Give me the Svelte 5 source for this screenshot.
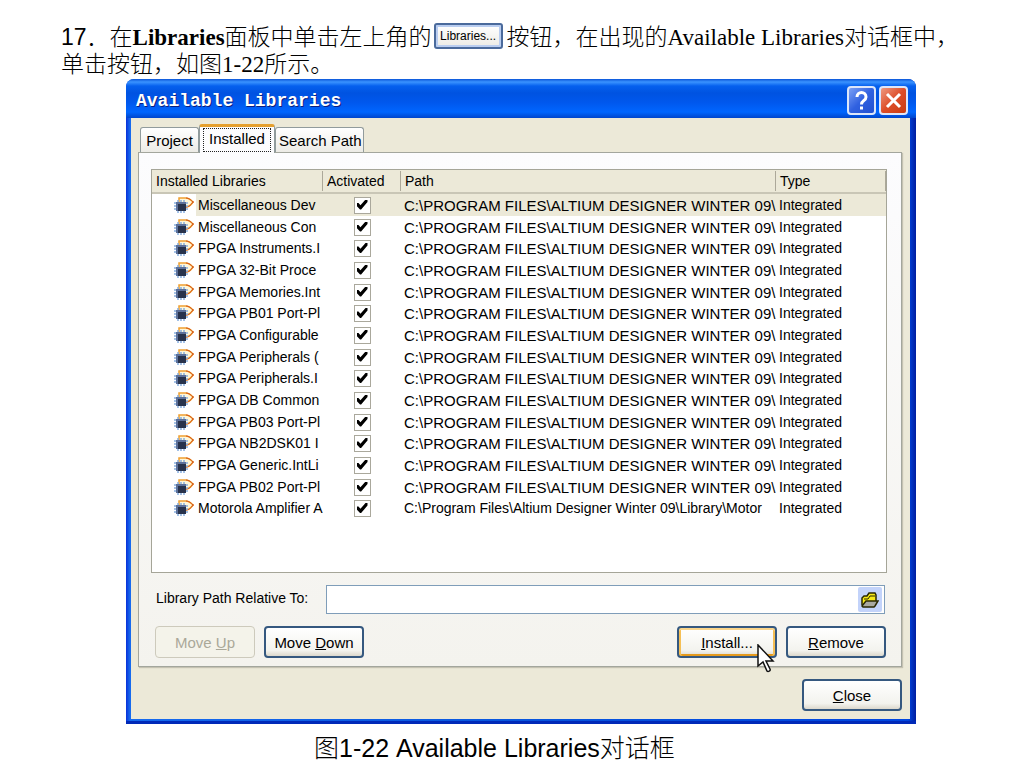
<script lang="ts">
	const programFiles = String.raw`C:\PROGRAM FILES\ALTIUM DESIGNER WINTER 09` + '\\';
	const libraryFolder = String.raw`C:\Program Files\Altium Designer Winter 09\Library\Motor`;

	const names = [
		'Miscellaneous Dev',
		'Miscellaneous Con',
		'FPGA Instruments.I',
		'FPGA 32-Bit Proce',
		'FPGA Memories.Int',
		'FPGA PB01 Port-Pl',
		'FPGA Configurable',
		'FPGA Peripherals (',
		'FPGA Peripherals.I',
		'FPGA DB Common',
		'FPGA PB03 Port-Pl',
		'FPGA NB2DSK01 I',
		'FPGA Generic.IntLi',
		'FPGA PB02 Port-Pl',
		'Motorola Amplifier A'
	];

	let libraries = $state(
		names.map((name) => ({
			name,
			activated: true,
			path: name.startsWith('Motorola') ? libraryFolder : programFiles,
			type: 'Integrated'
		}))
	);

	let selected = $state(0);
	let relativePath = $state('');
</script>

<main>
	<p class="step">
		<span class="number">17．</span>在<b>Libraries</b>面板中单击左上角的<button
			class="inline-button">Libraries...</button
		>按钮，在出现的Available Libraries对话框中，<br />单击按钮，如图1-22所示。
	</p>

	<section class="dialog" aria-labelledby="dialog-title">
		<header>
			<h1 id="dialog-title">Available Libraries</h1>
			<button class="caption help" aria-label="Help">
				<svg viewBox="0 0 25 25">
					<path d="M8 9C8 3 17 3 17 9C17 13 12.500 12 12.500 16.500" />
					<path d="M12.500 18.500v3" />
				</svg>
			</button>
			<button class="caption exit" aria-label="Close window">
				<svg viewBox="0 0 25 25"><path d="M6 6l13 13M19 6L6 19" /></svg>
			</button>
		</header>

		<div class="body">
			<div class="tabs" role="tablist">
				<button role="tab" aria-selected="false">Project</button>
				<button role="tab" aria-selected="true" class="active"><span>Installed</span></button>
				<button role="tab" aria-selected="false">Search Path</button>
			</div>

			<div class="panel" role="tabpanel">
				<div class="list">
					<table>
						<colgroup>
							<col class="col-name" />
							<col class="col-activated" />
							<col />
							<col class="col-type" />
						</colgroup>
						<thead>
							<tr>
								<th>Installed Libraries</th>
								<th>Activated</th>
								<th>Path</th>
								<th>Type</th>
							</tr>
						</thead>
						<tbody>
							{#each libraries as library, i}
								<tr class:selected={i === selected} onclick={() => (selected = i)}>
									<td class="name">
										<div>
											<svg class="chip" viewBox="0 0 20 19">
												<path
													d="M5 6V2h7c3 0 5 2 7 4-2 3-4 5-7 5"
													fill="#fff6d8"
													stroke="#f0a030"
													stroke-width="1.500"
												/>
												<path d="M12 2c3 0 5 2 7 4h1M19 6c-2 3-4 5-7 5" stroke="#d4581c" />
												<path
													d="M4 4v13M7 4v13M10 4v13M0 7h14M0 10h14M0 13h14"
													stroke="#86aee0"
													stroke-width="1.500"
												/>
												<path d="M2 6h10v9H2z" fill="#5c7099" />
												<path d="M4 8h8v7H4z" fill="#28334c" />
											</svg>
											<span>{library.name}</span>
										</div>
									</td>
									<td class="check">
										<input
											type="checkbox"
											aria-label="Activated"
											bind:checked={library.activated}
										/>
									</td>
									<td class:caps={library.path === programFiles}>{library.path}</td>
									<td>{library.type}</td>
								</tr>
							{/each}
						</tbody>
					</table>
				</div>

				<div class="path-row">
					<label for="relative-path">Library Path Relative To:</label>
					<div class="path-box">
						<input id="relative-path" type="text" bind:value={relativePath} />
						<button class="browse" aria-label="Browse">
							<svg viewBox="0 0 18 16">
								<path
									d="M1 13V6l2-2h3l2-3h6l1 2v6"
									fill="#f8ea18"
									stroke="#2a2800"
									stroke-width="1.500"
								/>
								<path d="M3 7h4l2-3h5" fill="none" stroke="#2a2800" />
								<path
									d="M1 14l4-5h12l-3 5-1 1H2z"
									fill="#a9a9a0"
									stroke="#2a2800"
									stroke-width="1.500"
								/>
							</svg>
						</button>
					</div>
				</div>

				<div class="actions">
					<button class="push" disabled>Move <u>U</u>p</button>
					<button class="push">Move <u>D</u>own</button>
					<span class="install">
						<button class="push hot"><u>I</u>nstall...</button>
						<svg class="cursor" viewBox="0 0 18 29">
							<path
								d="M1 1v21l5-4 4 9c1 1 4 0 3-2l-4-8h7z"
								fill="#fff"
								stroke="#111"
								stroke-width="1.500"
							/>
						</svg>
					</span>
					<button class="push"><u>R</u>emove</button>
				</div>
			</div>

			<footer>
				<button class="push"><u>C</u>lose</button>
			</footer>
		</div>
	</section>

	<p class="figure">图1-22 Available Libraries对话框</p>
</main>

<style>
	:global(body) {
		margin: 0;
		background: #fff;
		color: #000;
	}

	main {
		padding-top: 24px;
	}

	button,
	input {
		box-sizing: border-box;
		margin: 0;
		padding: 0;
		color: inherit;
		font: inherit;
	}

	p,
	h1 {
		margin: 0;
	}

	.step {
		margin-left: 61px;
		font-family: 'Liberation Serif', 'Noto Sans CJK SC', serif;
		font-size: 23px;
		font-weight: 300;
		line-height: 27px;
		white-space: nowrap;
	}

	.step b {
		font-weight: 700;
	}

	.number {
		font-family: 'Liberation Sans', 'Noto Sans CJK SC', sans-serif;
		line-height: 20px;
	}

	.inline-button {
		width: 69px;
		height: 26px;
		margin: -4px 4px -4px 2px;
		border: 2px solid #4a6a9c;
		border-radius: 3px;
		background: linear-gradient(#fff, #ecebe5);
		box-shadow: inset 0 0 0 2px #b9cdf0;
		font-family: 'Liberation Sans', sans-serif;
		font-size: 12px;
		line-height: 20px;
		vertical-align: 5px;
	}

	.dialog {
		margin: 1px 108px 0 126px;
		padding: 0 6px 5px 5px;
		border-radius: 8px 8px 0 0;
		background: linear-gradient(90deg, #0831d9, #166aee 4px, #0855dd 50%, #0046e0 99%, #001ea0);
		box-shadow: inset 0 -3px 0 #0029b8;
		font-family: 'Liberation Sans', sans-serif;
		font-size: 14px;
	}

	header {
		display: flex;
		gap: 3px;
		align-items: center;
		height: 39px;
		margin: 0 -6px 0 -5px;
		padding: 0 8px 0 10px;
		box-sizing: border-box;
		border-radius: 8px 8px 0 0;
		background: linear-gradient(
			#0a55d8,
			#3a93ff 3px,
			#0560ee 7px,
			#0053e1 14px,
			#0058ee 24px,
			#0066ff 33px,
			#0045cc
		);
	}

	h1 {
		flex: 1;
		padding-top: 4px;
		color: #fff;
		font-family: 'Liberation Mono', monospace;
		font-size: 18px;
		font-weight: 700;
		line-height: 22px;
		text-shadow: 1px 1px 0 #0a1f80;
	}

	.caption {
		width: 29px;
		height: 29px;
		margin-top: 3px;
		border: 2px solid #dce6fa;
		border-radius: 4px;
	}

	.caption svg {
		display: block;
		width: 25px;
		height: 25px;
		fill: none;
		stroke: #fff;
		stroke-width: 3;
	}

	.help {
		background: linear-gradient(135deg, #7ba0f5, #3061e0 50%, #2350d0);
	}

	.exit {
		background: linear-gradient(135deg, #ee9a82, #dd4d28 50%, #c93a12);
	}

	.body {
		padding: 7px 8px 8px 7px;
		background: #ece9d8;
	}

	.tabs {
		display: flex;
		align-items: flex-end;
		height: 27px;
		padding-left: 2px;
	}

	.tabs button {
		height: 25px;
		padding: 0 3px;
		border: 1px solid #919b9c;
		border-bottom: 0;
		border-radius: 3px 3px 0 0;
		background: linear-gradient(#fff, #ecebe6);
		font-size: 15px;
		line-height: 23px;
		white-space: nowrap;
	}

	.tabs button:first-child {
		width: 59px;
	}

	.tabs button:last-child {
		width: 89px;
	}

	.tabs .active {
		position: relative;
		width: 76px;
		height: 29px;
		margin-bottom: -1px;
		border-top: 3px solid #e5a02e;
		background: #fcfcfe;
	}

	.active span {
		display: block;
		height: 22px;
		border: 1px dotted #222;
		line-height: 20px;
	}

	.panel {
		padding: 16px 14px 8px 12px;
		border: 1px solid #a3a69d;
		box-shadow: 1px 1px 1px #c5c2b2;
		background: linear-gradient(#fcfcfe, #f4f3ee);
	}

	.list {
		height: 402px;
		border: 1px solid #a5a598;
		background: #fff;
		overflow: hidden;
	}

	table {
		width: 100%;
		border-collapse: separate;
		border-spacing: 0;
		table-layout: fixed;
	}

	.col-name {
		width: 171px;
	}

	.col-activated {
		width: 78px;
	}

	.col-type {
		width: 110px;
	}

	th,
	td {
		overflow: hidden;
		padding: 0 0 0 3px;
		font-weight: 400;
		text-align: left;
		white-space: nowrap;
	}

	th {
		height: 24px;
		padding-left: 4px;
		border-bottom: 2px solid #c9c6b6;
		background: linear-gradient(90deg, #ece9d8 calc(100% - 1px), #aca899 0) center / 100% 20px
			no-repeat #ece9d8;
		box-sizing: border-box;
	}

	td {
		height: 22px;
		line-height: 21px;
	}

	tbody tr:nth-child(3n) td {
		height: 21px;
	}

	.caps {
		font-size: 15px;
	}

	.name {
		padding-left: 22px;
	}

	.name div {
		display: flex;
		align-items: center;
		height: 21px;
	}

	.name span {
		flex: 1;
		overflow: hidden;
		padding-left: 2px;
	}

	.selected td {
		background: #ece9d8;
	}

	.selected .name {
		background: linear-gradient(90deg, #fff 44px, #ece9d8 0);
	}

	.chip {
		width: 20px;
		height: 19px;
		margin-right: 2px;
		fill: none;
	}

	.check {
		padding: 0;
		text-align: center;
	}

	.check input {
		display: block;
		width: 17px;
		height: 17px;
		margin: 0 auto;
		border: 1px solid #aaa89c;
		background: #fff;
		appearance: none;
	}

	.check input:checked::before {
		content: '';
		display: block;
		width: 11px;
		height: 10px;
		margin: 2px;
		background: #000;
		clip-path: polygon(0 35%, 18% 35%, 36% 58%, 82% 0, 100% 0, 100% 26%, 42% 100%, 32% 100%, 0 62%);
	}

	.path-row {
		display: flex;
		align-items: center;
		margin: 12px 2px 12px 5px;
	}

	label {
		width: 170px;
		padding-bottom: 4px;
		line-height: 24px;
	}

	.path-box {
		display: flex;
		flex: 1;
		box-sizing: border-box;
		height: 29px;
		padding: 1px;
		border: 1px solid #7f9db9;
		background: #fff;
	}

	.path-box input {
		flex: 1;
		min-width: 0;
		border: 0;
		padding: 0 4px;
		outline: 0;
		background: transparent;
	}

	.browse {
		width: 24px;
		margin-right: 1px;
		border: 0;
		border-radius: 2px;
		background: #c3d3fa;
	}

	.browse svg {
		display: block;
		width: 18px;
		height: 16px;
		margin: 0 auto;
	}

	.actions {
		display: flex;
		gap: 9px;
		margin: 0 1px 0 4px;
	}

	.push {
		width: 100px;
		height: 32px;
		border: 2px solid #35587f;
		border-radius: 4px;
		background: linear-gradient(#fff, #f3f3ee 80%, #dcd8cc);
		font-size: 15px;
	}

	.push:disabled {
		border: 1px solid #cdcabc;
		background: #f4f3ea;
		color: #aaa899;
	}

	.hot {
		box-shadow:
			inset 0 2px 0 #fbd68c,
			inset 2px 0 0 #f5bf55,
			inset -2px 0 0 #f5bf55,
			inset 0 -2px 0 #e59a1c;
	}

	.install {
		position: relative;
		margin-left: auto;
	}

	.cursor {
		position: absolute;
		top: 18px;
		left: 80px;
		width: 18px;
		height: 29px;
		pointer-events: none;
	}

	footer {
		display: flex;
		justify-content: flex-end;
		padding-top: 12px;
	}

	.figure {
		margin: 8px 0 0 314px;
		font-family: 'Liberation Sans', 'Noto Sans CJK SC', sans-serif;
		font-size: 25px;
		font-weight: 300;
		line-height: 32px;
		white-space: nowrap;
	}
</style>
